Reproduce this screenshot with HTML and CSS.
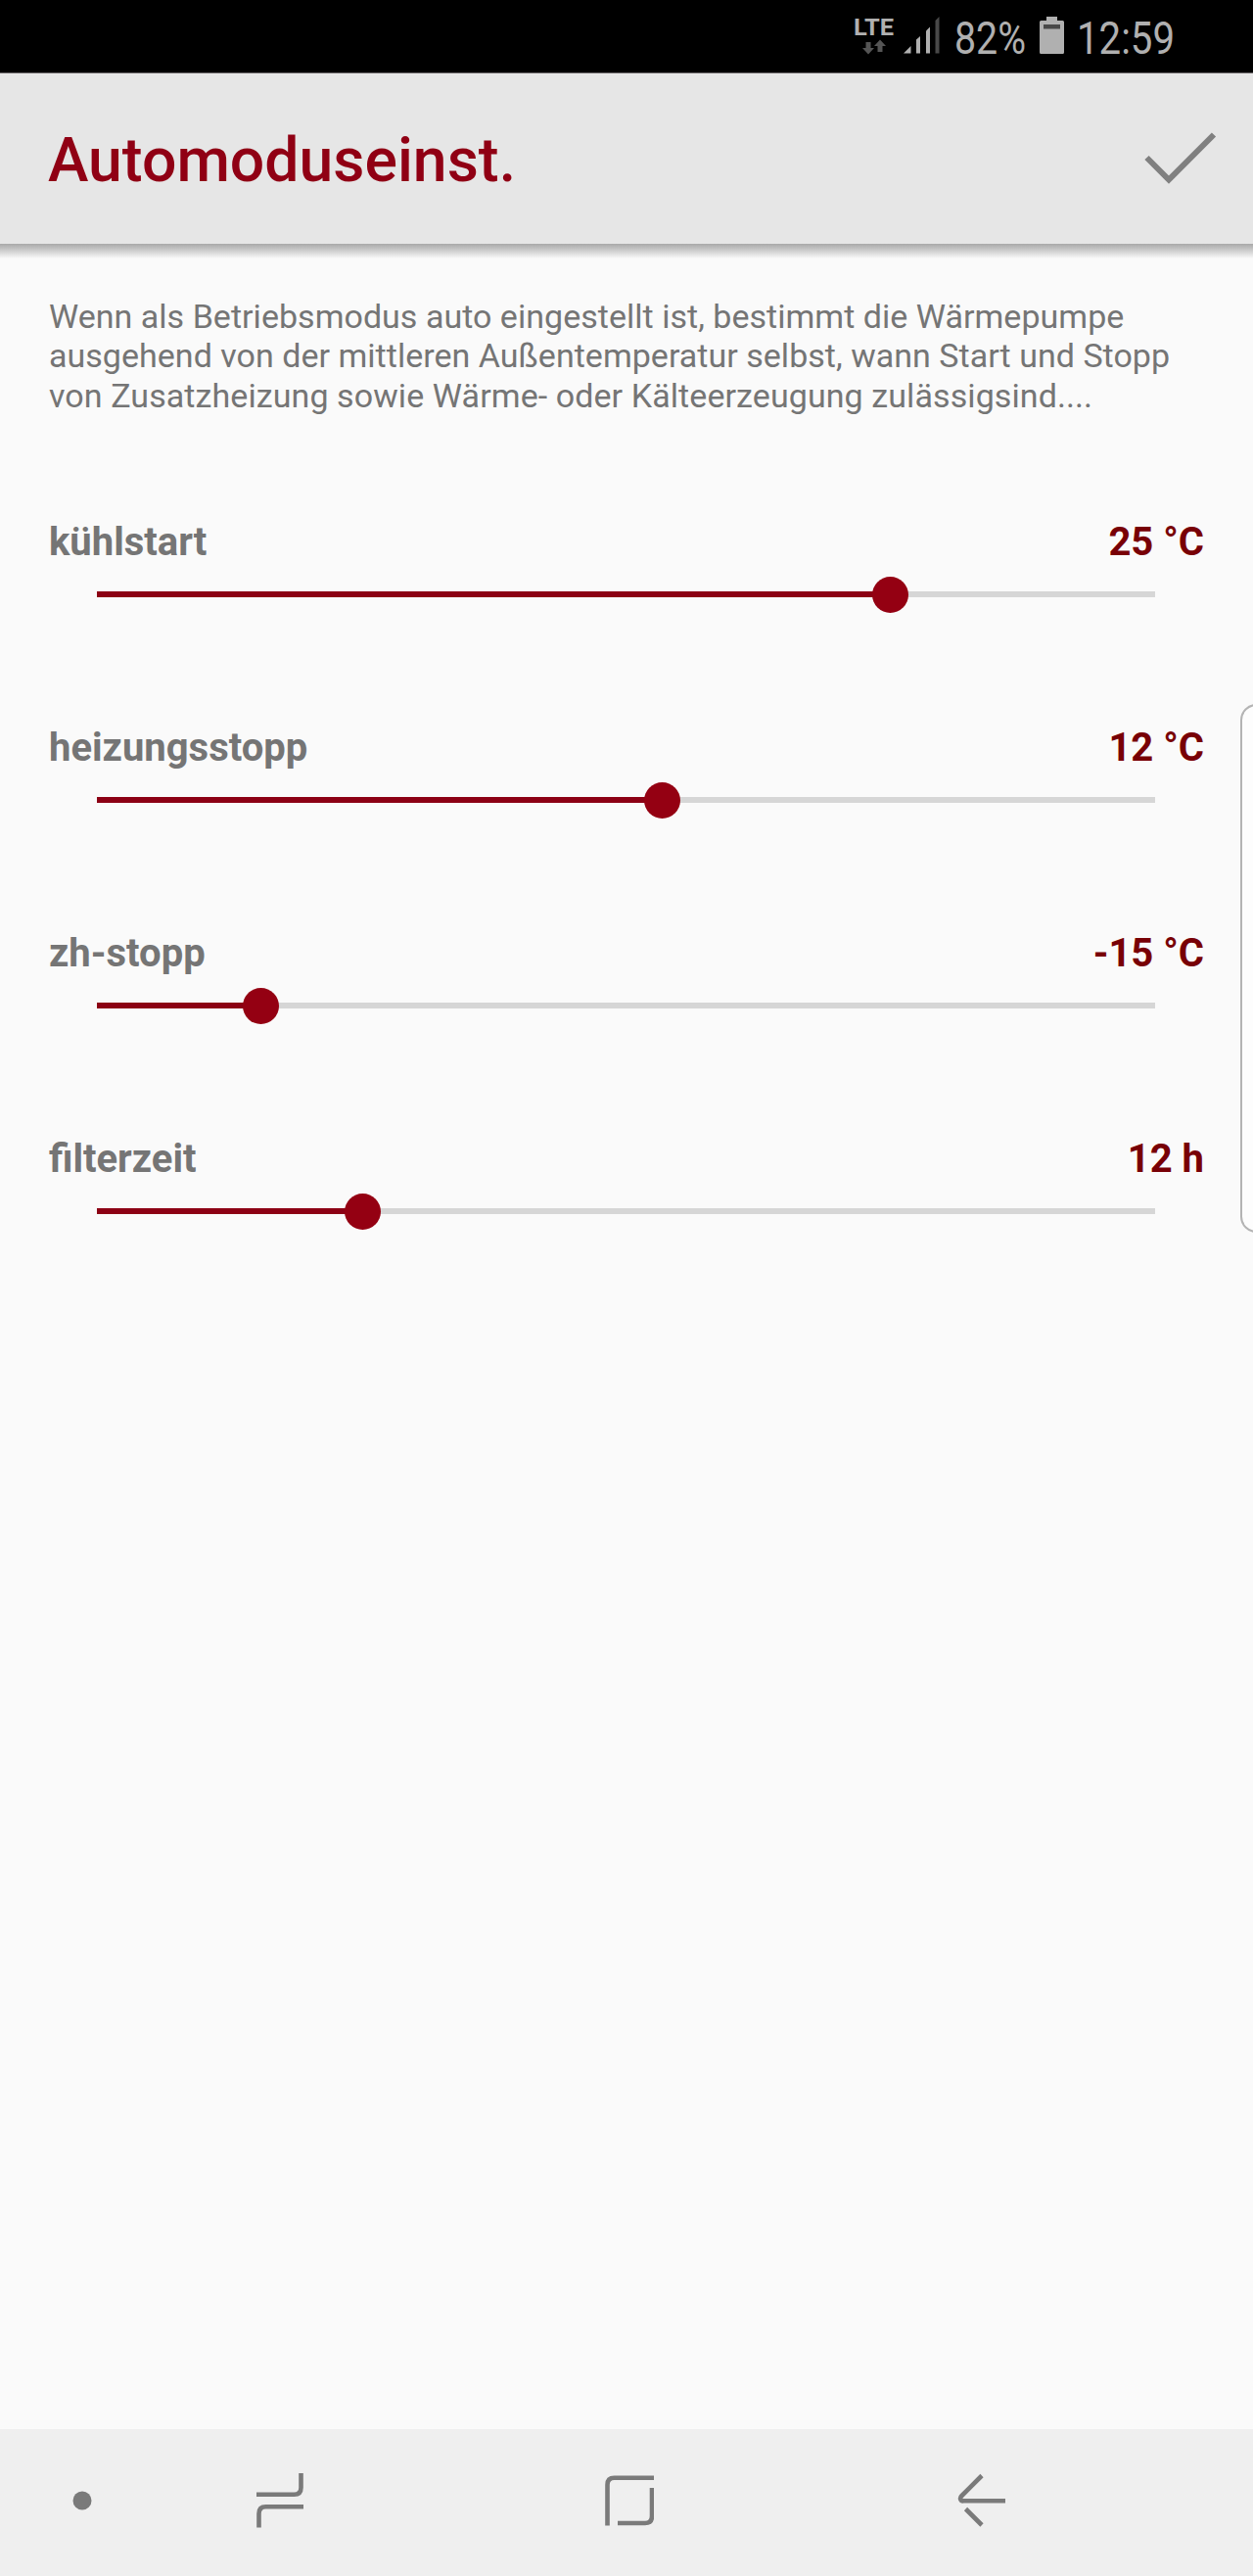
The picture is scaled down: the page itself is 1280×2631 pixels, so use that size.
FILE: index.html
```html
<!DOCTYPE html>
<html lang="de">
<head>
<meta charset="utf-8">
<title>Automoduseinst.</title>
<link rel="stylesheet" href="styles.css">
</head>
<body>
<div class="screen">
  <div class="status-bar">
    <svg class="status-icons" width="360" height="74" viewBox="860 0 360 74">
      <text class="lte" x="872" y="36" textLength="41" lengthAdjust="spacingAndGlyphs">LTE</text>
      <path fill="#555" d="M884.500 43h5v6h3.500l-6 6.500-6-6.500h3.500zM896.500 53h5v-6h3.500l-6-6.500-6 6.500h3.500z"/>
      <g fill="#b0b0b0">
        <path d="M923 54.500l7.500-7.500v7.500z"/>
        <path d="M936 54.500v-14l4-3.500v17.500z"/>
        <path d="M946 54.500v-23l4-4v27z"/>
      </g>
      <path fill="#484848" d="M955.500 54.500v-33.500l4-4v37.500z"/>
      <text class="status-text" x="975" y="54.500" textLength="73" lengthAdjust="spacingAndGlyphs">82%</text>
      <path fill="#b0b0b0" d="M1069 17h11v4h5.500q1.500 0 1.500 1.500v31q0 1.500-1.500 1.500h-22q-1.500 0-1.500-1.500v-31q0-1.500 1.500-1.500h5.500z"/>
      <path fill="#484848" d="M1066 25h17v4.500h-17z"/>
      <text class="status-text" x="1100" y="54.500" textLength="100" lengthAdjust="spacingAndGlyphs">12:59</text>
    </svg>
  </div>
  <header class="app-bar">
    <h1 class="title">Automoduseinst.</h1>
    <svg class="check" width="74" height="56" viewBox="0 0 74 56"><path d="M2.500 28L25 50.500 71 4.500" fill="none" stroke="#808080" stroke-width="6"/></svg>
  </header>
  <div class="app-bar-shadow"></div>
  <main class="content">
    <p class="description">Wenn als Betriebsmodus auto eingestellt ist, bestimmt die Wärmepumpe<br>ausgehend von der mittleren Außentemperatur selbst, wann Start und Stopp<br><span class="last-line">von Zusatzheizung sowie Wärme- oder Kälteerzeugung zulässigsind....</span></p>
    <section class="setting">
      <div class="setting-head"><span class="name">kühlstart</span><span class="value">25 °C</span></div>
      <div class="track"><div class="fill" style="width:810.500px"></div><div class="thumb"></div></div>
    </section>
    <section class="setting">
      <div class="setting-head"><span class="name">heizungsstopp</span><span class="value">12 °C</span></div>
      <div class="track"><div class="fill" style="width:577px"></div><div class="thumb"></div></div>
    </section>
    <section class="setting">
      <div class="setting-head"><span class="name">zh-stopp</span><span class="value">-15 °C</span></div>
      <div class="track"><div class="fill" style="width:167px"></div><div class="thumb"></div></div>
    </section>
    <section class="setting">
      <div class="setting-head"><span class="name">filterzeit</span><span class="value">12 h</span></div>
      <div class="track"><div class="fill" style="width:271px"></div><div class="thumb"></div></div>
    </section>
  </main>
  <nav class="nav-bar">
    <svg class="nav-dot" width="20" height="20" viewBox="0 0 20 20"><circle cx="10" cy="10" r="9.500" fill="#7a7a7a"/></svg>
    <svg class="nav-recents" width="48" height="56" viewBox="262 2526 48 56"><path d="M262 2547.700h38.500q7 0 7-7v-14.700M310 2560.200h-38.500q-7 0-7 7v14.300"/></svg>
    <svg class="nav-home" width="50" height="52" viewBox="618 2528 50 52"><path d="M668.500 2530.700h-41q-7 0-7 7v41.800M666 2541v29q0 7-7 7h-28"/></svg>
    <svg class="nav-back" width="50" height="56" viewBox="978 2526 50 56"><path d="M1003 2528.500l-20.500 20.500q-2 2-1.200 3.800t3 1.500h42.700M986.500 2562.500l16.500 16.500"/></svg>
  </nav>
  <div class="edge-handle"></div>
</div>
</body>
</html>
```
FILE: styles.css
```css
* {
  box-sizing: border-box;
}

body {
  margin: 0;
  background: #fafafa;
  font-family: Roboto, "Liberation Sans", sans-serif;
}

.screen {
  position: relative;
  display: flex;
  flex-direction: column;
  width: 1280px;
  height: 2631px;
  overflow: hidden;
}

.status-bar {
  display: flex;
  justify-content: flex-end;
  height: 75px;
  padding-right: 60px;
  background: #000;
  border-bottom: 1px solid #6b6869;
}

.status-icons {
  display: block;
}

.lte {
  fill: #b0b0b0;
  font-size: 24px;
  font-weight: 700;
}

.status-text {
  fill: #b0b0b0;
  font-size: 46px;
}

.app-bar {
  display: flex;
  align-items: center;
  justify-content: space-between;
  height: 174px;
  padding: 0 37px 0 49px;
  background: #e6e6e6;
}

.title {
  margin: 4px 0 0;
  color: #900014;
  font-size: 62.500px;
  font-weight: 500;
  line-height: 72px;
}

.check {
  margin-bottom: 3px;
}

.app-bar-shadow {
  height: 15px;
  background: linear-gradient(#a9a9a9, #c8c8c8 40%, #fafafa);
}

.content {
  flex: 1;
  padding: 39px 50px 0;
}

.description {
  margin: 0 0 105.800px;
  color: #757575;
  font-size: 34px;
  letter-spacing: 0.025px;
  line-height: 40.400px;
  white-space: nowrap;
}

.last-line {
  letter-spacing: 0.085px;
}

.setting {
  height: 210px;
}

.setting-head {
  display: flex;
  justify-content: space-between;
  font-size: 40px;
  font-weight: 700;
  line-height: 48px;
}

.name {
  color: #757575;
}

.value {
  color: #780006;
}

.track {
  display: flex;
  align-items: center;
  height: 6px;
  margin: 26px 50px 0 49px;
  background: #d6d6d6;
}

.fill {
  flex: none;
  height: 6px;
  background: #8c0014;
}

.thumb {
  flex: none;
  width: 37px;
  height: 37px;
  margin-left: -18.500px;
  border-radius: 50%;
  background: #940012;
}

.nav-bar {
  display: flex;
  align-items: center;
  height: 150px;
  padding: 0 0 4px 74px;
  background: #efefef;
}

.nav-bar path {
  fill: none;
  stroke: #7a7a7a;
  stroke-width: 4.600;
}

.nav-recents {
  margin-left: 168px;
}

.nav-home {
  margin-left: 308px;
}

.nav-back {
  margin-left: 310px;
}

.edge-handle {
  position: absolute;
  top: 719px;
  right: -20px;
  width: 33px;
  height: 540px;
  border: 2px solid #b4b4b4;
  border-radius: 18px;
  background: #fdfdfd;
}
```
